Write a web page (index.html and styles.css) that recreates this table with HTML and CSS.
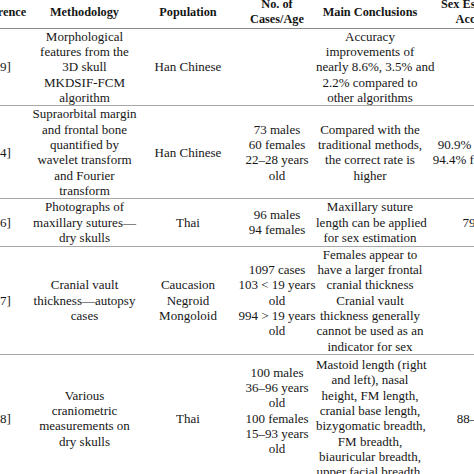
FILE: index.html
```html
<!DOCTYPE html>
<html>
<head>
<meta charset="utf-8">
<link rel="stylesheet" href="styles.css">
</head>
<body>
<div class="frame">
<table class="tbl">
<colgroup>
<col class="c-ref"><col class="c-meth"><col class="c-pop"><col class="c-cases"><col class="c-concl"><col class="c-acc">
</colgroup>
<thead>
<tr>
<th>Reference</th>
<th>Methodology</th>
<th>Population</th>
<th>No. of<br>Cases/Age</th>
<th>Main Conclusions</th>
<th>Sex Estimation<br>Accuracy</th>
</tr>
</thead>
<tbody>
<tr>
<td>[19]</td>
<td>Morphological<br>features from the<br>3D skull<br>MKDSIF-FCM<br>algorithm</td>
<td>Han Chinese</td>
<td></td>
<td>Accuracy<br>improvements of<br>nearly 8.6%, 3.5% and<br>2.2% compared to<br>other algorithms</td>
<td></td>
</tr>
<tr>
<td>[54]</td>
<td>Supraorbital margin<br>and frontal bone<br>quantified by<br>wavelet transform<br>and Fourier<br>transform</td>
<td>Han Chinese</td>
<td>73 males<br>60 females<br>22–28 years<br>old</td>
<td>Compared with the<br>traditional methods,<br>the correct rate is<br>higher</td>
<td>90.9% for males<br>94.4% for females</td>
</tr>
<tr>
<td>[56]</td>
<td>Photographs of<br>maxillary sutures—<br>dry skulls</td>
<td>Thai</td>
<td>96 males<br>94 females</td>
<td>Maxillary suture<br>length can be applied<br>for sex estimation</td>
<td class="acc-left">79%</td>
</tr>
<tr>
<td>[57]</td>
<td>Cranial vault<br>thickness—autopsy<br>cases</td>
<td>Caucasion<br>Negroid<br>Mongoloid</td>
<td>1097 cases<br>103 &lt; 19 years<br>old<br>994 &gt; 19 years<br>old</td>
<td>Females appear to<br>have a larger frontal<br>cranial thickness<br>Cranial vault<br>thickness generally<br>cannot be used as an<br>indicator for sex</td>
<td></td>
</tr>
<tr class="last">
<td>[58]</td>
<td>Various<br>craniometric<br>measurements on<br>dry skulls</td>
<td>Thai</td>
<td class="lift">100 males<br>36–96 years<br>old<br>100 females<br>15–93 years<br>old</td>
<td>Mastoid length (right<br>and left), nasal<br>height, FM length,<br>cranial base length,<br>bizygomatic breadth,<br>FM breadth,<br>biauricular breadth,<br>upper facial breadth,</td>
<td class="acc-left2">88–98%</td>
</tr>
</tbody>
</table>
</div>
</body>
</html>
```
FILE: styles.css
```css
html, body {
  margin: 0;
  padding: 0;
  background: #ffffff;
}
.frame {
  width: 474px;
  height: 474px;
  overflow: hidden;
  position: relative;
}
.tbl {
  border-collapse: collapse;
  table-layout: fixed;
  width: 568px;
  margin-left: -31px;
  margin-top: -3px;
  font-family: "Liberation Serif", "Times New Roman", serif;
  font-size: 13px;
  line-height: 15.35px;
  color: #161616;
}
.c-ref { width: 62px; }
.c-meth { width: 107px; }
.c-pop { width: 100px; }
.c-cases { width: 78px; }
.c-concl { width: 108px; }
.c-acc { width: 113px; }
.tbl th, .tbl td {
  padding: 0;
  text-align: center;
  vertical-align: middle;
  white-space: nowrap;
  overflow: visible;
}
.tbl th {
  font-weight: bold;
  font-size: 12.3px;
}
.tbl thead tr {
  border-bottom: 1px solid #8a8a8a;
}
.tbl tbody tr {
  border-bottom: 1px solid #a8a8a8;
}
.tbl tbody tr.last {
  border-bottom: none;
}
.tbl tr.last td {
  padding-top: 2px;
}
.tbl td.lift {
  padding-bottom: 15px;
}
.tbl td.acc-left {
  padding-right: 12px;
}
.tbl td.acc-left2 {
  padding-right: 4px;
}
```
